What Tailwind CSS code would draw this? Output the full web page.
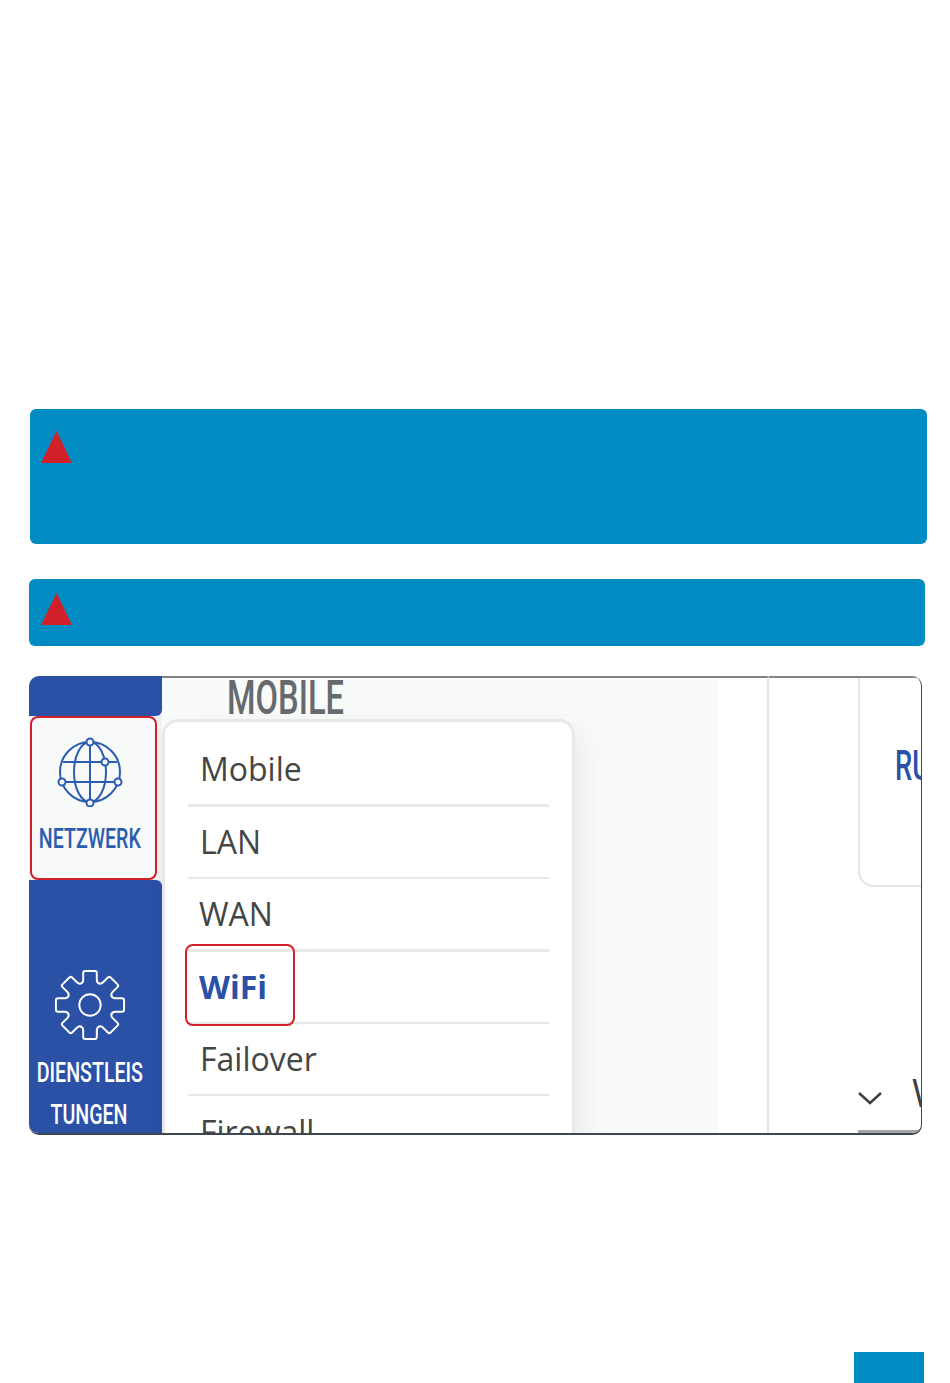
<!DOCTYPE html>
<html lang="de">
<head>
  <meta charset="UTF-8" />
  <meta name="viewport" content="width=device-width, initial-scale=1.0"/>
  <title>Netzwerk WiFi</title>
  <script src="https://cdn.jsdelivr.net/npm/@tailwindcss/browser@4"></script>
</head>
<body class="bg-white">
  <div class="flex flex-col w-[950px] h-[1383px] pt-[409px] overflow-hidden">

    <!-- Warning boxes -->
    <div class="ml-[30px] w-[897px] h-[135px] rounded-md bg-[#008bc2] pl-[11px] pt-[21px]">
      <svg width="31" height="33" viewBox="0 0 32 33" preserveAspectRatio="none"><polygon points="16,1 32,33 0,33" fill="#d2202a"/></svg>
    </div>
    <div class="ml-[29px] mt-[35px] w-[896px] h-[67px] rounded-md bg-[#008bc2] pl-[12px] pt-[13px]">
      <svg width="31" height="33" viewBox="0 0 32 33" preserveAspectRatio="none"><polygon points="16,1 32,33 0,33" fill="#d2202a"/></svg>
    </div>

    <!-- Screenshot frame -->
    <div class="relative flex ml-[29px] mt-[30px] w-[893px] h-[459px] overflow-hidden rounded-[10px] border-r border-r-[#3e4650] border-b-2 border-b-[#3e4650] bg-white">

      <!-- Sidebar -->
      <div class="flex flex-col w-[133px] shrink-0 bg-[#f1f2f2]">
        <div class="h-[40px] shrink-0 bg-[#2a51a6] rounded-br-md"></div>
        <div class="flex flex-col shrink-0 items-center ml-px w-[127px] h-[164px] pr-[7px] pt-[19px] rounded-lg border-2 border-[#d2202a] bg-[#f8f9f9]">
          <svg class="shrink-0" width="66" height="70" viewBox="-33 -35 66 70" fill="none" stroke="#2a5db0" stroke-width="2">
            <circle cx="0" cy="0" r="30"/>
            <ellipse cx="0" cy="0" rx="16" ry="30"/>
            <path d="M0 -30V30M-27 -10H27M-27 10H27"/>
            <g fill="#f8f9f9">
              <circle cx="0" cy="-30" r="3.5"/>
              <circle cx="0" cy="31" r="3.5"/>
              <circle cx="-28" cy="10" r="3.5"/>
              <circle cx="28" cy="10" r="3.5"/>
              <circle cx="15" cy="-10" r="3.5"/>
            </g>
          </svg>
          <span class="mt-[15px] whitespace-nowrap scale-x-[.7] font-['Roboto',sans-serif] font-medium text-[28px] leading-[34px] text-[#2a5db0]">NETZWERK</span>
        </div>
        <div class="flex flex-col items-center flex-1 pr-[12px] pt-[89px] rounded-tr-md bg-[#2a51a6] text-white">
          <svg class="shrink-0" width="72" height="72" viewBox="-37 -37 74 74" fill="none" stroke="#ffffff" stroke-width="2" stroke-linecap="round">
            <circle cx="0" cy="0" r="11"/>
            <path d="M-9.2 -22.2Q-7 -23 -7 -26L-7 -33Q-7 -35 -5 -35L5 -35Q7 -35 7 -33L7 -26Q7 -23 9.2 -22.2"/>
            <path transform="rotate(45)" d="M-9.2 -22.2Q-7 -23 -7 -26L-7 -33Q-7 -35 -5 -35L5 -35Q7 -35 7 -33L7 -26Q7 -23 9.2 -22.2"/>
            <path transform="rotate(90)" d="M-9.2 -22.2Q-7 -23 -7 -26L-7 -33Q-7 -35 -5 -35L5 -35Q7 -35 7 -33L7 -26Q7 -23 9.2 -22.2"/>
            <path transform="rotate(135)" d="M-9.2 -22.2Q-7 -23 -7 -26L-7 -33Q-7 -35 -5 -35L5 -35Q7 -35 7 -33L7 -26Q7 -23 9.2 -22.2"/>
            <path transform="rotate(180)" d="M-9.2 -22.2Q-7 -23 -7 -26L-7 -33Q-7 -35 -5 -35L5 -35Q7 -35 7 -33L7 -26Q7 -23 9.2 -22.2"/>
            <path transform="rotate(225)" d="M-9.2 -22.2Q-7 -23 -7 -26L-7 -33Q-7 -35 -5 -35L5 -35Q7 -35 7 -33L7 -26Q7 -23 9.2 -22.2"/>
            <path transform="rotate(270)" d="M-9.2 -22.2Q-7 -23 -7 -26L-7 -33Q-7 -35 -5 -35L5 -35Q7 -35 7 -33L7 -26Q7 -23 9.2 -22.2"/>
            <path transform="rotate(315)" d="M-9.2 -22.2Q-7 -23 -7 -26L-7 -33Q-7 -35 -5 -35L5 -35Q7 -35 7 -33L7 -26Q7 -23 9.2 -22.2"/>
          </svg>
          <span class="mt-[11px] whitespace-nowrap scale-x-[.7] font-['Roboto',sans-serif] font-medium text-[28px] leading-[42px]">DIENSTLEIS</span>
          <span class="whitespace-nowrap scale-x-[.7] font-['Roboto',sans-serif] font-medium text-[28px] leading-[42px]">TUNGEN</span>
        </div>
      </div>

      <!-- Main column with menu -->
      <div class="w-[556px] shrink-0 border-t-2 border-t-[#808488] bg-[#f9fafa]">
        <div class="h-[42px] pl-[65px] -mt-px">
          <span class="inline-block origin-left whitespace-nowrap scale-x-[.68] font-['Roboto',sans-serif] font-medium text-[48px] leading-[42px] text-[#666a6c]">MOBILE</span>
        </div>
        <div class="w-[413px] rounded-2xl border-[3px] border-[#e8e8e8] bg-white pl-[23px] pr-[23px] shadow-[10px_10px_30px_rgba(0,0,0,0.06)] font-['Open_Sans',sans-serif] text-[32px] text-[#454545]">
          <div class="flex items-center h-[85px] pl-[12px] pt-[12px] border-b-[3px] border-[#e8e8e8]">Mobile</div>
          <div class="flex items-center h-[72px] pl-[12px] border-b-2 border-[#e8e8e8]">LAN</div>
          <div class="flex items-center h-[73px] pl-[11px] border-b-[3px] border-[#e8e8e8]">WAN</div>
          <div class="flex items-center h-[72px] pl-[11px] border-b-2 border-[#e8e8e8] font-bold text-[#2a51a6]">WiFi</div>
          <div class="flex items-center h-[72px] pl-[12px] border-b-2 border-[#e8e8e8]">Failover</div>
          <div class="flex items-center h-[72px] pl-[12px]">Firewall</div>
        </div>
      </div>

      <!-- Right columns -->
      <div class="w-[51px] shrink-0 border-t-2 border-t-[#808488] border-r-2 border-r-[#e5e5e5]"></div>
      <div class="flex flex-col flex-1 pl-[89px] border-t-2 border-t-[#808488]">
        <div class="flex items-center h-[209px] w-[80px] pl-[35px] rounded-bl-2xl border-l-2 border-b-2 border-[#e5e5e5] overflow-hidden">
          <span class="inline-block origin-left whitespace-nowrap scale-x-[.65] font-['Roboto',sans-serif] font-medium text-[42px] leading-none text-[#2a51a6] -mt-[32px]">RUN</span>
        </div>
        <div class="flex items-center h-[50px] mt-[186px] w-[64px] overflow-hidden">
          <svg class="shrink-0" width="24" height="14" viewBox="0 0 24 14" fill="none" stroke="#404040" stroke-width="2.5"><path d="M1 2L12 12L23 2"/></svg>
          <span class="ml-[30px] -mt-[12px] font-['Open_Sans',sans-serif] text-[38px] leading-none text-[#404040]">W</span>
        </div>
        <div class="mt-auto w-[63px] h-[3px] bg-[#a5a5a5]"></div>
      </div>

      <!-- Red highlight over WiFi row -->
      <div class="absolute left-[156px] top-[268px] w-[110px] h-[82px] rounded-lg border-2 border-[#d2202a]"></div>
    </div>

    <!-- Page corner tab -->
    <div class="self-end mt-auto mr-[26px] w-[70px] h-[31px] bg-[#008bc2]"></div>
  </div>
</body>
</html>
